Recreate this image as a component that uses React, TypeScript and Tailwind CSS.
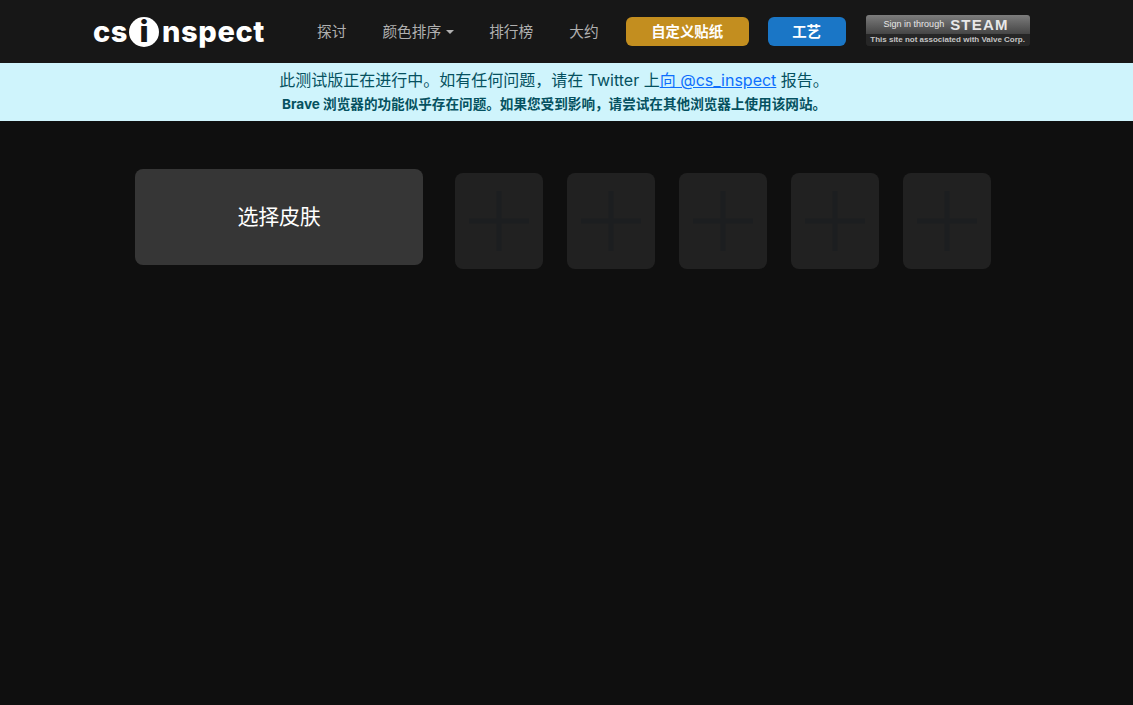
const SANS = "font-['Inter','Noto_Sans_CJK_SC',sans-serif]";

function Logo() {
  return (
    <a className="flex items-center shrink-0 w-[171px] h-[34px] text-white font-['Inter',sans-serif] font-extrabold text-[29px] leading-none tracking-[0.6px]">
      <span>cs</span>
      <span className="flex items-center justify-center shrink-0 w-[30px] h-[30px] ml-[1px] mr-[3px] rounded-full bg-white text-[#171717] text-[29px] font-black tracking-normal">
        i
      </span>
      <span>nspect</span>
    </a>
  );
}

function SteamButton() {
  return (
    <a className="flex flex-col w-[164px] h-[31px] rounded-[3px] overflow-hidden bg-[#1c1c1c] font-['Liberation_Sans',sans-serif] text-center">
      <div className="h-[19px] flex items-center justify-center gap-[6px] pr-[3px] bg-gradient-to-b from-[#7d7d7d] to-[#454545] text-[#e8e8e8]">
        <span className="text-[9px] leading-none">Sign in through</span>
        <span className="text-[15px] leading-none font-bold tracking-[1.2px]">STEAM</span>
      </div>
      <div className="flex-1 text-[8px] leading-[12px] font-bold text-[#c4c4c4] bg-[#262626] whitespace-nowrap">
        This site not associated with Valve Corp.
      </div>
    </a>
  );
}

function EmptySlot() {
  return (
    <div className="w-[88px] h-[96px] rounded-lg bg-[#212121] flex items-center justify-center">
      <svg width="60" height="60" viewBox="0 0 60 60" fill="none" stroke="#1c1e20" strokeWidth="5">
        <path d="M30 0v60M0 30h60" />
      </svg>
    </div>
  );
}

export default function App() {
  return (
    <div className={`min-h-[705px] bg-[#0f0f0f] ${SANS}`}>
      {/* Navbar */}
      <nav className="h-[63px] bg-[#171717] flex items-center pl-[93px]">
        <Logo />
        <div className="flex items-center ml-[53px] mt-[2px] text-[14.7px] text-[#b0b0b0]">
          <a>探讨</a>
          <a className="ml-[36px] flex items-center">
            颜色排序
            <span className="ml-[5px] border-x-[4px] border-x-transparent border-t-[4px] border-t-[#b0b0b0]" />
          </a>
          <a className="ml-[35px]">排行榜</a>
          <a className="ml-[36px]">大约</a>
        </div>
        <button className="ml-[27px] w-[123px] h-[29px] rounded-[6px] bg-[#c38e1f] text-white text-[14.4px] font-bold">
          自定义贴纸
        </button>
        <button className="ml-[19px] w-[78px] h-[29px] rounded-[6px] bg-[#1a76c6] text-white text-[14.4px] font-bold">
          工艺
        </button>
        <div className="ml-[20px] -mt-[2px]">
          <SteamButton />
        </div>
      </nav>

      {/* Beta notice */}
      <div className="h-[58px] bg-[#cff4fc] text-[#055160] text-center pt-[5px] pr-[25px]">
        <p className="text-[16px] leading-[24px]">
          此测试版正在进行中。如有任何问题，请在 Twitter 上
          <a className="text-[#0d6efd] underline">向 @cs_inspect</a> 报告。
        </p>
        <p className="text-[13.6px] leading-[21px] mt-[2px] font-bold">
          Brave 浏览器的功能似乎存在问题。如果您受到影响，请尝试在其他浏览器上使用该网站。
        </p>
      </div>

      {/* Skin picker */}
      <main className="flex pt-[48px] pl-[135px]">
        <button className="w-[288px] h-[96px] rounded-lg bg-[#363636] text-white text-[21px] tracking-[-0.3px]">
          选择皮肤
        </button>
        <div className="flex gap-[24px] ml-[32px] mt-[4px]">
          <EmptySlot />
          <EmptySlot />
          <EmptySlot />
          <EmptySlot />
          <EmptySlot />
        </div>
      </main>
    </div>
  );
}
